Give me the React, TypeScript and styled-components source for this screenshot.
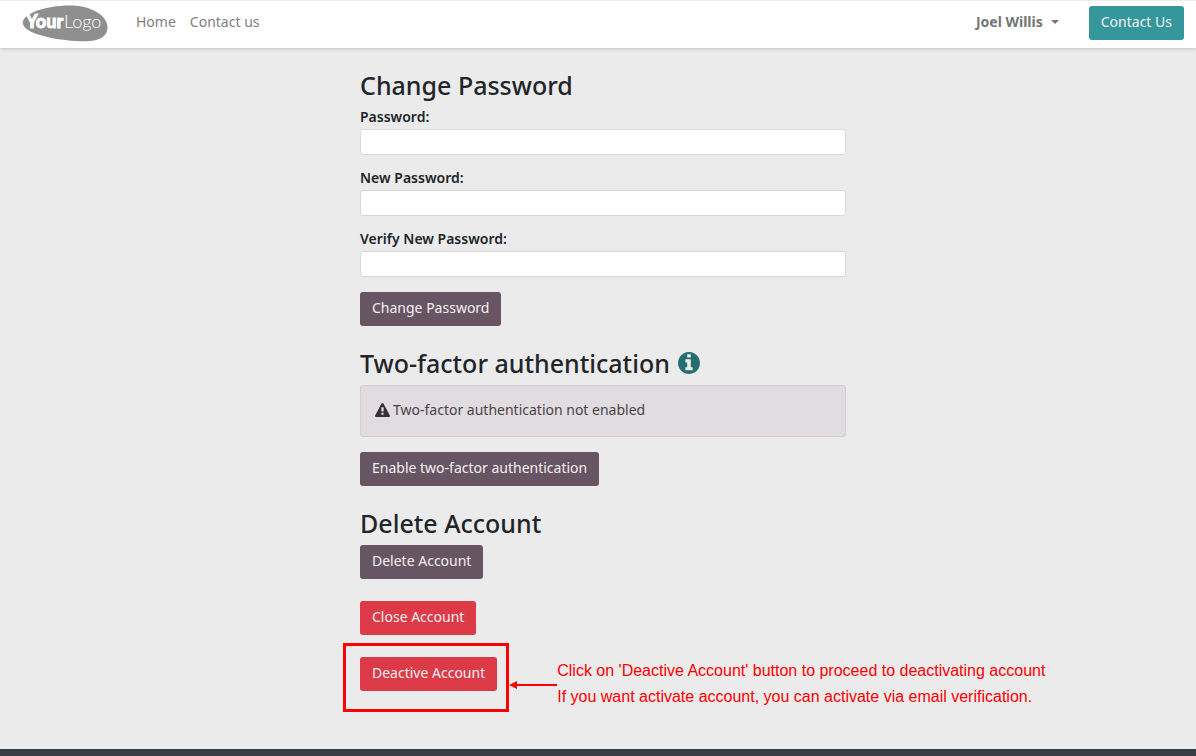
import React from "react";
import styled, { createGlobalStyle } from "styled-components";

const GlobalStyle = createGlobalStyle`
  *, *::before, *::after { box-sizing: border-box; }
  body {
    margin: 0;
    background: #ebebeb;
    color: #212529;
    font: 400 14px/20px "Noto Sans", "Open Sans", sans-serif;
  }
  button, input { font: inherit; }
`;

const Page = styled.div`
  display: flex;
  flex-direction: column;
  min-height: 100vh;
`;

const Header = styled.header`
  display: flex;
  align-items: center;
  height: 48px;
  padding: 0 12px 3px 22px;
  background: #fff;
  border-top: 1px solid #ececec;
  box-shadow: 0 1px 3px rgba(0, 0, 0, 0.18);
`;

const LogoLink = styled.a`
  display: flex;
  margin-right: 28px;
`;

const Nav = styled.nav`
  display: flex;
  flex: 1;
  gap: 14px;
  padding-bottom: 2px;
`;

const NavLink = styled.a`
  color: #808080;
  text-decoration: none;
`;

const UserMenu = styled.button`
  display: flex;
  align-items: center;
  gap: 8px;
  margin-right: 30px;
  padding: 0 0 2px;
  border: 0;
  background: none;
  color: #757575;
  font-weight: 700;
`;

const Button = styled.button<{ $tone: "teal" | "plum" | "red" }>`
  height: 34px;
  padding: 0 12px 2px;
  border: 0;
  border-radius: 3px;
  color: #f4eff2;
  background: ${({ $tone }) =>
    ({ teal: "#35979c", plum: "#685563", red: "#dd3a47" })[$tone]};
`;

const Main = styled.main`
  display: flex;
  flex: 1;
  flex-direction: column;
  gap: 22px;
  width: 100%;
  max-width: 496px;
  margin: 0 auto;
  padding: 22px 0 58px 10px;
`;

const Section = styled.section`
  display: flex;
  flex-direction: column;
  align-items: flex-start;
`;

const Title = styled.h2`
  display: flex;
  align-items: center;
  gap: 8px;
  margin: 0 0 7px;
  font-size: 25px;
  line-height: 30px;
  font-weight: 500;
`;

const InfoLink = styled.a`
  display: flex;
  color: #256e71;
`;

const Form = styled.form`
  display: flex;
  flex-direction: column;
  align-items: flex-start;
  gap: 15px;
  width: 100%;
`;

const Fields = styled.div`
  display: flex;
  flex-direction: column;
  gap: 13px;
  width: 100%;
`;

const Field = styled.div`
  display: flex;
  flex-direction: column;
  gap: 3px;
`;

const Label = styled.label`
  line-height: 19px;
  font-weight: 600;
`;

const Input = styled.input`
  width: 100%;
  height: 26px;
  padding: 2px 8px;
  border: 1px solid #d5d9de;
  border-radius: 3px;
  background: #fff;
`;

const Alert = styled.div`
  display: flex;
  align-items: center;
  gap: 3px;
  width: 100%;
  height: 52px;
  margin-bottom: 15px;
  padding: 0 14px 2px;
  border: 1px solid #d4ced3;
  border-radius: 3px;
  background: #e1dce0;
  color: #4b4248;
`;

const Actions = styled.div`
  display: flex;
  flex-direction: column;
  align-items: flex-start;
  gap: 22px;
`;

const Highlighted = styled.div`
  position: relative;
`;

const Highlight = styled.div`
  position: absolute;
  inset: -14px -12px -21px -17px;
  border: 3px solid #ff0000;
  pointer-events: none;
`;

const Callout = styled.div`
  position: absolute;
  top: 1px;
  left: calc(100% + 12px);
  display: flex;
  align-items: flex-start;
  color: #ff0000;
  font: 16px/26px "Liberation Sans", Arial, sans-serif;
  white-space: nowrap;
`;

const Arrow = styled.svg`
  flex: none;
  margin-top: 23px;
`;

const Note = styled.p`
  margin: 0;
`;

const Footer = styled.footer`
  height: 7px;
  background: #383e45;
`;

function Logo() {
  return (
    <svg width="86" height="38" viewBox="0 -1 86 38" role="img" aria-label="Your Logo">
      <path
        d="M.7 17.5C1 9 22 .5 48 .5C70 .5 85.5 11 85.5 22.5C85.5 32 76 36.3 63 36.3C40 36.3 1 30 .7 17.5Z"
        fill="#8f8f8f"
      />
      <g fill="#fff" fontFamily="Lato, sans-serif">
        <text x="4" y="23" fontSize="18" fontWeight="900" stroke="#fff" strokeWidth="0.8">Your</text>
        <text x="42" y="23" fontSize="18" fontWeight="300">Logo</text>
      </g>
    </svg>
  );
}

function CaretIcon() {
  return (
    <svg width="8" height="4" viewBox="0 0 8 4" fill="currentColor" aria-hidden="true">
      <path d="M0 0H8L4 4Z" />
    </svg>
  );
}

function InfoIcon() {
  return (
    <svg width="22" height="22" viewBox="128 128 1536 1536" fill="currentColor" aria-hidden="true">
      <path d="M1152 1376v-160q0-14-9-23t-23-9h-96v-512q0-14-9-23t-23-9h-320q-14 0-23 9t-9 23v160q0 14 9 23t23 9h96v320h-96q-14 0-23 9t-9 23v160q0 14 9 23t23 9h448q14 0 23-9t9-23zM1024 480v-160q0-14-9-23t-23-9h-192q-14 0-23 9t-9 23v160q0 14 9 23t23 9h192q14 0 23-9t9-23zM1664 896q0 209-103 385.5t-279.500 279.500-385.500 103-385.500-103-279.500-279.500-103-385.500 103-385.500 279.500-279.500 385.500-103 385.500 103 279.500 279.500 103 385.500z" />
    </svg>
  );
}

function WarningIcon() {
  return (
    <svg width="15" height="14" viewBox="0 0 1792 1664" fill="#3a2e37" aria-hidden="true">
      <path d="M1024 1375v-190q0-14-9.500-23.500t-22.500-9.500h-192q-13 0-22.500 9.500t-9.500 23.500v190q0 14 9.500 23.500t22.500 9.500h192q13 0 22.500-9.500t9.500-23.500zM1022 1001l18-459q0-12-10-19-13-11-24-11h-220q-11 0-24 11-10 7-10 21l17 457q0 10 10 16.500t24 6.500h185q14 0 23.500-6.500t10.500-16.500zM1008 67l768 1408q35 63-2 126-17 29-46.500 46t-63.500 17h-1536q-34 0-63.500-17t-46.500-46q-37-63-2-126l768-1408q17-31 47-49t65-18 65 18 47 49z" />
    </svg>
  );
}

const passwordFields = [
  { id: "old", label: "Password:" },
  { id: "new1", label: "New Password:" },
  { id: "new2", label: "Verify New Password:" },
];

export default function App() {
  return (
    <Page>
      <GlobalStyle />
      <Header>
        <LogoLink href="#">
          <Logo />
        </LogoLink>
        <Nav>
          <NavLink href="#">Home</NavLink>
          <NavLink href="#">Contact us</NavLink>
        </Nav>
        <UserMenu type="button">
          Joel Willis <CaretIcon />
        </UserMenu>
        <Button $tone="teal" type="button">Contact Us</Button>
      </Header>
      <Main>
        <Section>
          <Title>Change Password</Title>
          <Form>
            <Fields>
              {passwordFields.map(({ id, label }) => (
                <Field key={id}>
                  <Label htmlFor={id}>{label}</Label>
                  <Input id={id} type="password" />
                </Field>
              ))}
            </Fields>
            <Button $tone="plum" type="button">Change Password</Button>
          </Form>
        </Section>
        <Section>
          <Title>
            Two-factor authentication
            <InfoLink href="#" aria-label="About two-factor authentication">
              <InfoIcon />
            </InfoLink>
          </Title>
          <Alert role="status">
            <WarningIcon />
            Two-factor authentication not enabled
          </Alert>
          <Button $tone="plum" type="button">Enable two-factor authentication</Button>
        </Section>
        <Section>
          <Title>Delete Account</Title>
          <Actions>
            <Button $tone="plum" type="button">Delete Account</Button>
            <Button $tone="red" type="button">Close Account</Button>
            <Highlighted>
              <Button $tone="red" type="button">Deactive Account</Button>
              <Highlight />
              <Callout>
                <Arrow width="48" height="8" viewBox="0 0 48 8" aria-hidden="true">
                  <path d="M6 4H48" stroke="#ff0000" strokeWidth="2" />
                  <path d="M0 4L8 0V8Z" fill="#ff0000" />
                </Arrow>
                <Note>
                  Click on 'Deactive Account' button to proceed to deactivating account
                  <br />
                  If you want activate account, you can activate via email verification.
                </Note>
              </Callout>
            </Highlighted>
          </Actions>
        </Section>
      </Main>
      <Footer />
    </Page>
  );
}
